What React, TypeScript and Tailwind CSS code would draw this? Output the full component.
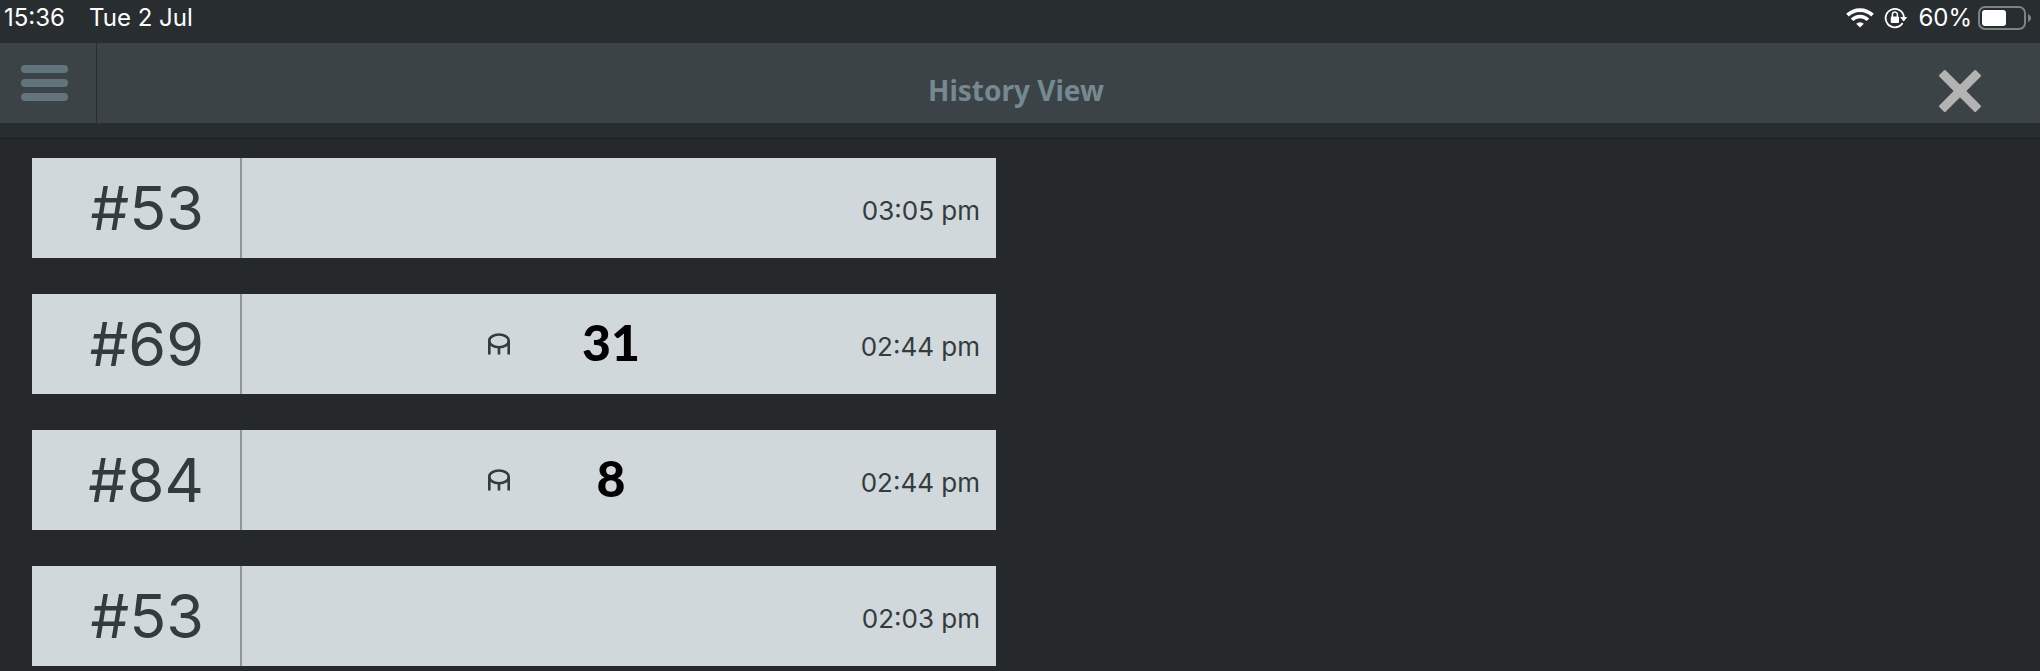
import React from 'react';

interface Order {
  id: number;
  number: number;
  table?: number;
  time: string;
}

const orders: Order[] = [
  { id: 1, number: 53, time: '03:05 pm' },
  { id: 2, number: 69, table: 31, time: '02:44 pm' },
  { id: 3, number: 84, table: 8, time: '02:44 pm' },
  { id: 4, number: 53, time: '02:03 pm' },
];

const WifiIcon: React.FC = () => (
  <svg viewBox="0 0 28 20" className="w-7 h-5" fill="none" aria-hidden="true">
    <path d="M1.5 7.2a17.8 17.8 0 0 1 25 0" stroke="white" strokeWidth="3.8" />
    <path d="M6 11.8a11.4 11.4 0 0 1 16 0" stroke="white" strokeWidth="3.6" />
    <path d="M14 19.6l-3.8-3.8a5.4 5.4 0 0 1 7.6 0z" fill="white" />
  </svg>
);

const RotationLockIcon: React.FC = () => (
  <svg viewBox="0 0 24 22" className="w-6 h-[22px]" fill="none" aria-hidden="true">
    <path d="M18.2 16.6A9.2 9.2 0 1 1 19.9 9.6" stroke="white" strokeWidth="1.8" strokeLinecap="round" />
    <path d="M16 10h7.4l-3.7 4.6z" fill="white" />
    <rect x="6.8" y="9.6" width="8.2" height="6.4" rx="1" fill="white" />
    <path d="M8.4 10V7.6a2.5 2.5 0 0 1 5 0V10" stroke="white" strokeWidth="1.5" />
  </svg>
);

const BatteryIcon: React.FC = () => (
  <svg viewBox="0 0 54 24" className="w-[54px] h-6" fill="none" aria-hidden="true">
    <rect x="1" y="1" width="46" height="22" rx="6" stroke="#7f8384" strokeWidth="2" />
    <rect x="4" y="4" width="24" height="16" rx="3" fill="white" />
    <path d="M50 8c4 1.6 4 6.4 0 8z" fill="#7f8384" />
  </svg>
);

const StoolIcon: React.FC = () => (
  <svg viewBox="0 0 24 22" className="w-6 h-[22px]" fill="none" stroke="#333b3e" strokeWidth="2.6" aria-hidden="true">
    <ellipse cx="12" cy="7.9" rx="9.8" ry="6.4" />
    <path d="M2.3 8v13.6M21.7 8v13.6M12 14v7.6" />
  </svg>
);

const CloseIcon: React.FC = () => (
  <svg viewBox="0 0 48 48" className="size-12" fill="#b3b3b3" aria-hidden="true">
    <rect x="-2" y="19.5" width="52" height="9" rx="1.5" transform="rotate(45 24 24)" />
    <rect x="-2" y="19.5" width="52" height="9" rx="1.5" transform="rotate(-45 24 24)" />
  </svg>
);

const StatusBar: React.FC = () => (
  <div className="flex h-[43px] justify-between pl-1 pr-2 pb-2 text-2xl leading-none text-white font-['Inter',sans-serif]">
    <div className="flex items-center gap-6">
      <span>15:36</span>
      <span>Tue 2 Jul</span>
    </div>
    <div className="flex items-center">
      <WifiIcon />
      <span className="mx-2.5">
        <RotationLockIcon />
      </span>
      <span className="mr-1.5">60%</span>
      <BatteryIcon />
    </div>
  </div>
);

const Header: React.FC = () => (
  <header className="grid h-20 grid-cols-[1fr_auto_1fr] items-center bg-[#3b4346]">
    <button
      type="button"
      aria-label="Menu"
      className="flex h-full w-[97px] flex-col justify-center gap-[6px] border-r border-[#272c2f] pl-[21px]"
    >
      <span className="h-2 w-[47px] rounded-full bg-[#63757c]" />
      <span className="h-2 w-[47px] rounded-full bg-[#63757c]" />
      <span className="h-2 w-[47px] rounded-full bg-[#63757c]" />
    </button>
    <h1 className="pt-3.5 pr-2 text-[28px] leading-9 font-bold text-[#748990] font-['Noto_Sans',sans-serif]">
      History View
    </h1>
    <button type="button" aria-label="Close" className="mr-14 justify-self-end pt-4">
      <CloseIcon />
    </button>
  </header>
);

const OrderCard: React.FC<{ order: Order }> = ({ order }) => (
  <li className="flex h-[100px] bg-[#d0d8db] text-[#333b3e]">
    <div className="flex w-[210px] items-center justify-end border-r-2 border-[#919799] pr-9 text-[61px] leading-none font-['Inter',sans-serif]">
      #{order.number}
    </div>
    <div className="grid flex-1 grid-cols-[1fr_200px_1fr] items-center pr-4">
      <div className="flex justify-end">{order.table && <StoolIcon />}</div>
      <div className="pb-1 text-center text-[50px] leading-none font-black text-black font-['Lato',sans-serif]">
        {order.table}
      </div>
      <div className="pt-1 text-right text-[26px] font-['Inter',sans-serif]">{order.time}</div>
    </div>
  </li>
);

const App: React.FC = () => (
  <div className="min-h-screen bg-[#25292c]">
    <div className="border-b border-[#1b1f21] bg-[#282d30] pb-[15px]">
      <StatusBar />
      <Header />
    </div>
    <main className="grid grid-cols-2 gap-x-12 px-8 pt-[19px]">
      <ul className="flex flex-col gap-9">
        {orders.map(order => (
          <OrderCard key={order.id} order={order} />
        ))}
      </ul>
    </main>
  </div>
);

export default App;
